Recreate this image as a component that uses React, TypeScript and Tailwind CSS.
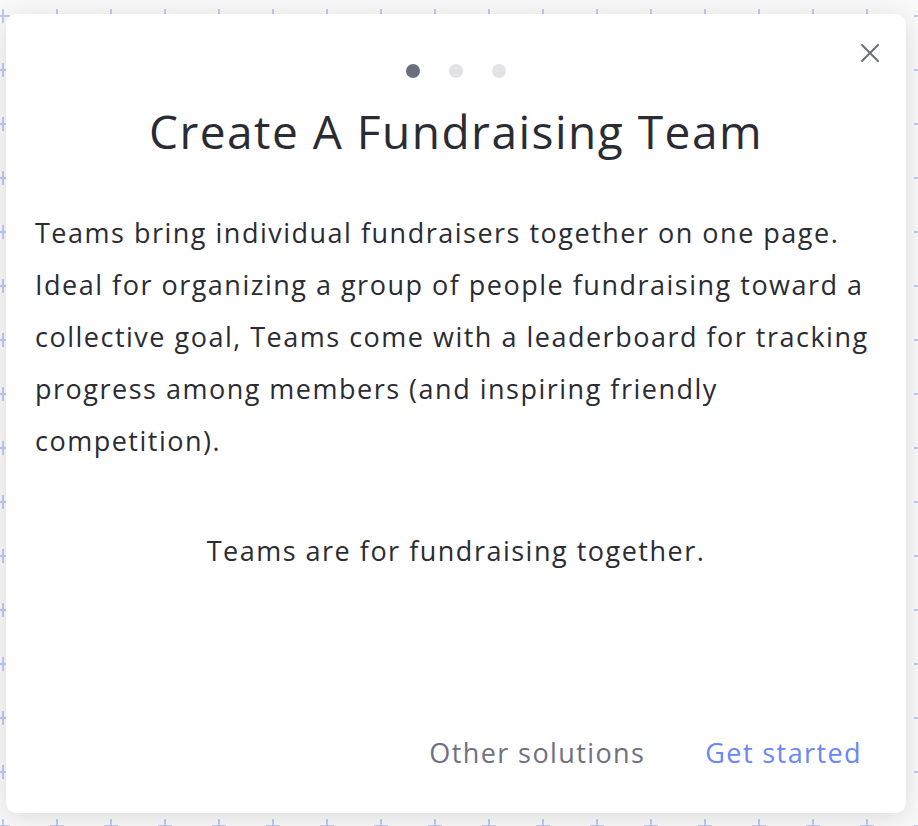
import React from 'react';

function GridBackdrop() {
    return (
        <svg className="absolute inset-0" width="918" height="826" xmlns="http://www.w3.org/2000/svg">
            <defs>
                <pattern id="cross" x="-4" y="9" width="54" height="54" patternUnits="userSpaceOnUse">
                    <path d="M7 0V14M0 7H14" stroke="#c0c9f6" strokeWidth="2" />
                </pattern>
            </defs>
            <rect width="918" height="826" fill="url(#cross)" />
        </svg>
    );
}

export default function App() {
    const dots = [true, false, false];

    return (
        <div className="relative w-[918px] h-[826px] overflow-hidden bg-[#f9f9fa] font-['Open_Sans',sans-serif] text-[#2b2c33]">
            <GridBackdrop />
            <div className="relative ml-[6px] mt-[14px] w-[900px] h-[799px] rounded-[10px] bg-white shadow-[0_4px_24px_rgba(0,0,0,0.12)] flex flex-col">
                <button className="absolute top-[30px] right-[27px] w-[18px] h-[18px] text-[#6b6e7b]" aria-label="Close">
                    <svg viewBox="0 0 18 18" width="18" height="18" fill="none" stroke="currentColor" strokeWidth="2" strokeLinecap="round">
                        <path d="M1 1L17 17M17 1L1 17" />
                    </svg>
                </button>

                <div className="pt-[50px] flex justify-center gap-[29px]">
                    {dots.map((active, i) => (
                        <span key={i} className={`w-[14px] h-[14px] rounded-full ${active ? 'bg-[#6b6e7d]' : 'bg-[#e3e3e6]'}`} />
                    ))}
                </div>

                <h1 className="mt-[23px] text-center text-[46px] leading-[60px] font-normal tracking-[1.5px]">
                    Create A Fundraising Team
                </h1>

                <div className="mt-[46px] px-[29px] text-[27px] leading-[52px] tracking-[1.5px]">
                    <p className="whitespace-nowrap">
                        Teams bring individual fundraisers together on one page.<br />
                        Ideal for organizing a group of people fundraising toward a<br />
                        collective goal, Teams come with a leaderboard for tracking<br />
                        progress among members (and inspiring friendly<br />
                        competition).
                    </p>
                    <p className="mt-[58px] text-center">
                        Teams are for fundraising together.
                    </p>
                </div>

                <div className="mt-auto pb-[40px] pr-[44px] flex justify-end gap-[60px] text-[27px] leading-[40px] tracking-[1.4px]">
                    <button className="text-[#6f7080]">Other solutions</button>
                    <button className="text-[#6a86f7]">Get started</button>
                </div>
            </div>
        </div>
    );
}
